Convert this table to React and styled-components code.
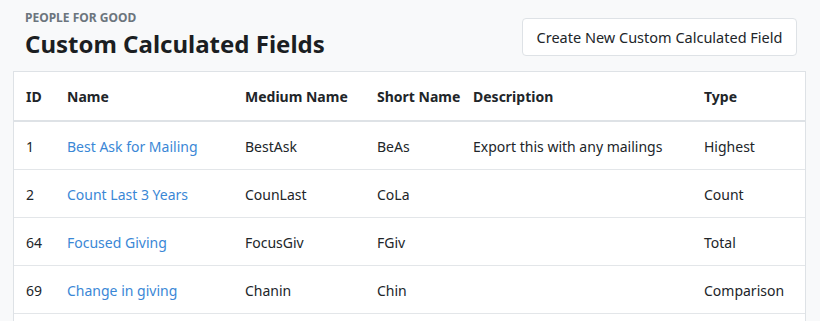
import React from 'react';
import styled, { createGlobalStyle } from 'styled-components';

const GlobalStyle = createGlobalStyle`
    body {
        margin: 0;
        background: #f8f9fa;
        font-family: "Noto Sans", "Open Sans", sans-serif;
        color: #212529;
    }
`;

const Page = styled.div`
    padding: 0 14px 0 13px;
`;

const Header = styled.div`
    display: flex;
    justify-content: space-between;
    align-items: flex-start;
    padding: 10px 9px 11px 12px;
`;

const Org = styled.div`
    font-size: 12px;
    font-weight: 700;
    color: #6c757d;
    line-height: 16px;
`;

const Title = styled.h1`
    margin: 2px 0 0;
    font-size: 24px;
    font-weight: 700;
    line-height: 32px;
    color: #1b1e22;
`;

const Button = styled.button`
    margin-top: 8px;
    height: 38px;
    width: 275px;
    padding: 0;
    background: #fff;
    border: 1px solid #dee2e6;
    border-radius: 4px;
    font-family: inherit;
    font-size: 14.5px;
    color: #212529;
    cursor: pointer;
`;

const Card = styled.div`
    background: #fff;
    border: 1px solid #dee2e6;
    padding-bottom: 40px;
`;

const Table = styled.table`
    width: 100%;
    table-layout: fixed;
    border-collapse: collapse;
    font-size: 14px;
`;

const Th = styled.th`
    box-sizing: border-box;
    text-align: left;
    font-weight: 700;
    padding: 14px 12px 12px;
    line-height: 22px;
    border-bottom: 2px solid #dee2e6;
    width: ${props => props.width}px;
    white-space: nowrap;
`;

const Td = styled.td`
    padding: 13px 12px 11px;
    line-height: 23px;
    border-bottom: 1px solid #e3e6e9;
    white-space: nowrap;
`;

const Link = styled.a`
    color: #3a87d6;
    text-decoration: none;
`;

const columns = [
    { label: 'ID', width: 41 },
    { label: 'Name', width: 178 },
    { label: 'Medium Name', width: 132 },
    { label: 'Short Name', width: 96 },
    { label: 'Description', width: 231 },
    { label: 'Type', width: 113 },
];

const rows = [
    { id: 1, name: 'Best Ask for Mailing', medium: 'BestAsk', short: 'BeAs', description: 'Export this with any mailings', type: 'Highest' },
    { id: 2, name: 'Count Last 3 Years', medium: 'CounLast', short: 'CoLa', description: '', type: 'Count' },
    { id: 64, name: 'Focused Giving', medium: 'FocusGiv', short: 'FGiv', description: '', type: 'Total' },
    { id: 69, name: 'Change in giving', medium: 'Chanin', short: 'Chin', description: '', type: 'Comparison' },
];

function App() {
    return (
        <Page>
            <GlobalStyle />
            <Header>
                <div>
                    <Org>PEOPLE FOR GOOD</Org>
                    <Title>Custom Calculated Fields</Title>
                </div>
                <Button>Create New Custom Calculated Field</Button>
            </Header>
            <Card>
                <Table>
                    <thead>
                        <tr>
                            {columns.map(col => (
                                <Th key={col.label} width={col.width}>{col.label}</Th>
                            ))}
                        </tr>
                    </thead>
                    <tbody>
                        {rows.map(row => (
                            <tr key={row.id}>
                                <Td>{row.id}</Td>
                                <Td><Link href="#">{row.name}</Link></Td>
                                <Td>{row.medium}</Td>
                                <Td>{row.short}</Td>
                                <Td>{row.description}</Td>
                                <Td>{row.type}</Td>
                            </tr>
                        ))}
                    </tbody>
                </Table>
            </Card>
        </Page>
    );
}

export default App;
